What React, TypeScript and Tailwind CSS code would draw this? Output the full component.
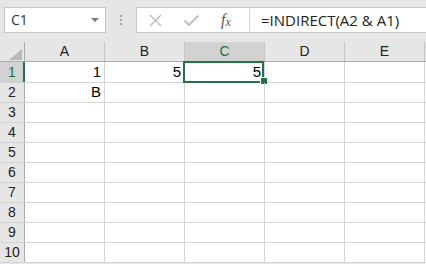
import React from "react";

const cols = ["A", "B", "C", "D", "E"];
const rows = [1, 2, 3, 4, 5, 6, 7, 8, 9, 10];

const data: Record<string, string> = {
  A1: "1",
  B1: "5",
  C1: "5",
  A2: "B",
};

export default function App() {
  return (
    <div
      className="w-[426px] h-[264px] overflow-hidden bg-[#e6e6e6] relative"
      style={{ fontFamily: "'Liberation Sans', Arial, sans-serif" }}
    >
      {/* Formula bar */}
      <div className="h-[42px] flex items-start pt-[7px] pl-[4px]">
        <div className="w-[102px] h-[26px] border border-[#c6c6c6] bg-white flex items-center pl-[6px] pr-[6px] shrink-0">
          <span className="text-[14px] text-[#333] font-['Open_Sans',sans-serif] leading-none">C1</span>
          <div className="ml-auto w-0 h-0 border-l-[4px] border-r-[4px] border-t-[4px] border-l-transparent border-r-transparent border-t-[#7a7a7a]" />
        </div>
        <div className="w-[30px] h-[26px] flex flex-col items-center justify-center gap-[2px] shrink-0">
          <div className="w-[2px] h-[2px] bg-[#a8a8a8]" />
          <div className="w-[2px] h-[2px] bg-[#a8a8a8]" />
          <div className="w-[2px] h-[2px] bg-[#a8a8a8]" />
        </div>
        <div className="flex-1 h-[26px] border-y border-l border-[#c6c6c6] bg-white flex items-center">
          <div className="w-[112px] h-full flex items-center pl-[12px] shrink-0">
            <svg width="13" height="13" viewBox="0 0 13 13" className="shrink-0">
              <path d="M1 1 L12 12 M12 1 L1 12" stroke="#bdbdbd" strokeWidth="1.4" fill="none" />
            </svg>
            <svg width="17" height="13" viewBox="0 0 17 13" className="ml-[21px] shrink-0">
              <path d="M1.5 6.5 L6 11 L15.5 1.5" stroke="#c2c2c2" strokeWidth="2.2" fill="none" />
            </svg>
            <span
              className="ml-[21px] italic text-[#555] leading-none flex items-end"
              style={{ fontFamily: "'Liberation Serif', 'Times New Roman', serif" }}
            >
              <span className="text-[16px]">f</span>
              <span className="text-[12px]">x</span>
            </span>
          </div>
          <div className="h-full border-l border-[#d4d4d4] flex items-center pl-[11px]">
            <span className="text-[15px] text-[#222] whitespace-nowrap font-['Open_Sans',sans-serif]">
              =INDIRECT(A2 &amp; A1)
            </span>
          </div>
        </div>
      </div>

      {/* Grid */}
      <div className="bg-white">
        {/* header row */}
        <div className="flex h-[20px] bg-[#e6e6e6] border-b border-[#ababab]">
          <div className="w-[25px] shrink-0 border-r border-[#ababab] relative flex items-end justify-end pr-[2px] pb-[1px]">
            <svg width="13" height="11" viewBox="0 0 13 11">
              <path d="M13 0 L13 11 L0 11 Z" fill="#b9b9b9" />
            </svg>
          </div>
          {cols.map((c) => (
            <div
              key={c}
              className={`w-[80px] shrink-0 border-r border-[#c6c6c6] flex items-center justify-center text-[14px] ${
                c === "C" ? "bg-[#d2d2d2] text-[#217346]" : "text-[#222]"
              }`}
            >
              {c}
            </div>
          ))}
          <div className="flex-1" />
        </div>
        {rows.map((r) => (
          <div
            key={r}
            className={`flex ${r === 1 ? "h-[21px]" : "h-[20px]"} border-b border-[#d4d4d4]`}
          >
            <div
              className={`w-[25px] shrink-0 flex items-center justify-center text-[14px] ${
                r === 1
                  ? "bg-[#d2d2d2] text-[#217346] border-r-2 border-[#217346] pl-[1px]"
                  : "bg-[#e6e6e6] text-[#222] border-r border-[#ababab]"
              }`}
            >
              {r}
            </div>
            {cols.map((c) => {
              const key = `${c}${r}`;
              const sel = key === "C1";
              return (
                <div
                  key={key}
                  className="w-[80px] shrink-0 border-r border-[#d4d4d4] relative flex items-center justify-end pr-[3px] text-[15px] text-black"
                >
                  {data[key] ?? ""}
                  {sel && (
                    <>
                      <div className="absolute left-[-2px] top-[-1px] right-[0px] bottom-[-1px] border-2 border-[#217346]" />
                      <div className="absolute right-[-3px] bottom-[-2px] w-[6px] h-[6px] bg-[#217346] outline outline-1 outline-white" />
                    </>
                  )}
                </div>
              );
            })}
            <div className="flex-1" />
          </div>
        ))}
      </div>
    </div>
  );
}
